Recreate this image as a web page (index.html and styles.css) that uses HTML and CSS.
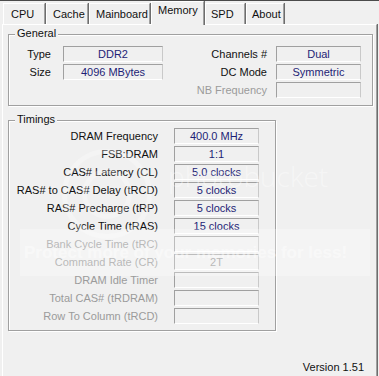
FILE: index.html
```
<!DOCTYPE html>
<html lang="en">
<head>
    <meta charset="UTF-8">
    <title>CPU-Z Memory</title>
    <link rel="stylesheet" href="styles.css">
</head>
<body>
<div class="window">
    <div class="tabs">
        <div class="tab tab-cpu">CPU</div>
        <div class="tab tab-cache">Cache</div>
        <div class="tab tab-main">Mainboard</div>
        <div class="tab tab-mem active">Memory</div>
        <div class="tab tab-spd">SPD</div>
        <div class="tab tab-about">About</div>
    </div>
    <div class="panel">
        <div class="group general">
            <span class="legend">General</span>
            <div class="general-grid">
                <span class="label">Type</span>
                <span class="value">DDR2</span>
                <span class="label">Channels #</span>
                <span class="value">Dual</span>

                <span class="label">Size</span>
                <span class="value">4096 MBytes</span>
                <span class="label">DC Mode</span>
                <span class="value">Symmetric</span>

                <span></span>
                <span></span>
                <span class="label disabled">NB Frequency</span>
                <span class="value"></span>
            </div>
        </div>

        <div class="group timings">
            <span class="legend">Timings</span>
            <div class="timings-grid">
                <span class="label">DRAM Frequency</span>
                <span class="value">400.0 MHz</span>
                <span class="label">FSB:DRAM</span>
                <span class="value">1:1</span>
                <span class="label">CAS# Latency (CL)</span>
                <span class="value">5.0 clocks</span>
                <span class="label">RAS# to CAS# Delay (tRCD)</span>
                <span class="value">5 clocks</span>
                <span class="label">RAS# Precharge (tRP)</span>
                <span class="value">5 clocks</span>
                <span class="label">Cycle Time (tRAS)</span>
                <span class="value">15 clocks</span>
                <span class="label disabled">Bank Cycle Time (tRC)</span>
                <span class="value"></span>
                <span class="label disabled">Command Rate (CR)</span>
                <span class="value disabled">2T</span>
                <span class="label disabled">DRAM Idle Timer</span>
                <span class="value"></span>
                <span class="label disabled">Total CAS# (tRDRAM)</span>
                <span class="value"></span>
                <span class="label disabled">Row To Column (tRCD)</span>
                <span class="value"></span>
            </div>
        </div>

        <div class="version">Version 1.51</div>
    </div>

    <!-- watermark left on the original screenshot -->
    <div class="wm-ring wm-ring-1"></div>
    <div class="wm-ring wm-ring-2"></div>
    <div class="wm-logo">photobucket</div>
    <div class="wm-band">Protect more of your memories for less!</div>
</div>
</body>
</html>
```

FILE: styles.css
```
* {
    box-sizing: border-box;
}

body {
    margin: 0;
    background: #f0f0f0;
    font-family: 'Liberation Sans', Arial, sans-serif;
    font-size: 11px;
    color: #111;
}

.window {
    position: relative;
    width: 379px;
    height: 376px;
    overflow: hidden;
    border-top: 1px solid #4b4b4b;
}

/* tabs */

.tabs {
    display: flex;
    align-items: flex-end;
    height: 23px;
    padding-left: 3px;
}

.tab {
    height: 21px;
    padding: 4px 0 0 6px;
    line-height: 13px;
    background: #f0f0f0;
    border-left: 1px solid #fff;
    border-top: 1px solid #fff;
    border-right: 1px solid #a0a0a0;
    box-shadow: 1px 0 0 #6d6d6d;
    margin-right: 1px;
}

.tab-cpu { width: 42px; padding-left: 7px; }
.tab-cache { width: 42px; }
.tab-main { width: 61px; }
.tab-spd { width: 40px; padding-left: 5px; }
.tab-about { width: 38px; padding-left: 5px; }

.tab.active {
    position: relative;
    z-index: 2;
    width: 53px;
    height: 24px;
    padding-top: 2px;
    margin-bottom: -1px;
}

/* tab panel */

.panel {
    margin-left: 2px;
    width: 375px;
    height: 352px;
    border-left: 1px solid #fff;
    border-top: 1px solid #fff;
    border-right: 1px solid #a0a0a0;
    box-shadow: 1px 0 0 #6d6d6d;
    padding: 9px 0 0 5px;
}

.group {
    position: relative;
    border: 1px solid #a0a0a0;
    box-shadow: inset 1px 1px 0 #fff, 1px 1px 0 #fff;
}

.legend {
    position: absolute;
    top: -8px;
    left: 6px;
    padding: 0 2px;
    line-height: 13px;
    background: #f0f0f0;
}

.general {
    width: 365px;
    height: 72px;
    padding-top: 11px;
}

.timings {
    width: 268px;
    height: 211px;
    margin-top: 14px;
    padding-top: 7px;
}

.general-grid,
.timings-grid {
    display: grid;
    grid-auto-rows: 16px;
    row-gap: 2px;
}

.general-grid {
    grid-template-columns: 54px 100px 113px 85px;
}

.general-grid .label:nth-child(4n+1) {
    padding-right: 12px;
}

.general-grid .label:nth-child(4n+3) {
    padding-right: 9px;
}

.timings-grid {
    grid-template-columns: 165px 85px;
}

.timings-grid .label {
    padding-right: 16px;
}

.label {
    text-align: right;
    line-height: 16px;
    white-space: nowrap;
}

.value {
    text-align: center;
    line-height: 14px;
    color: #1e1e76;
    border: 1px solid;
    border-color: #a0a0a0 #c9c9c9 #fff #a0a0a0;
}

.disabled {
    color: #9b9b9b;
}

.version {
    margin-top: 30px;
    padding-right: 12px;
    text-align: right;
    line-height: 13px;
}

/* watermark */

.wm-ring {
    position: absolute;
    border-radius: 50%;
    border: 5px solid rgba(255, 255, 255, 0.25);
    pointer-events: none;
}

.wm-ring-1 {
    left: 62px;
    top: 148px;
    width: 90px;
    height: 90px;
}

.wm-ring-2 {
    left: 82px;
    top: 168px;
    width: 50px;
    height: 50px;
}

.wm-logo {
    position: absolute;
    left: 168px;
    top: 156px;
    font-size: 28px;
    font-family: 'Open Sans', sans-serif;
    font-weight: 300;
    color: rgba(255, 255, 255, 0.4);
    pointer-events: none;
}

.wm-band {
    position: absolute;
    left: 20px;
    top: 228px;
    width: 350px;
    height: 47px;
    padding-left: 4px;
    line-height: 47px;
    background: rgba(255, 255, 255, 0.3);
    font-size: 17px;
    font-weight: bold;
    white-space: nowrap;
    color: rgba(255, 255, 255, 0.45);
    pointer-events: none;
}
```
